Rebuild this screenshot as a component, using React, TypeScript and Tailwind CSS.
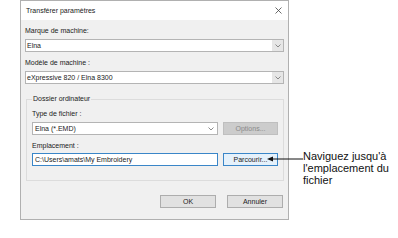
import React from 'react';

function Chevron({ className = '' }: { className?: string }) {
  return (
    <svg width="6" height="4" viewBox="0 0 6 4" className={className}>
      <path d="M0.5 0.5 L3 3 L5.5 0.5" fill="none" stroke="#707070" strokeWidth="0.8" />
    </svg>
  );
}

function DropSelect({ value }: { value: string }) {
  return (
    <div className="flex h-[13px] w-full items-stretch border border-[#b4b4b4] bg-white">
      <div className="flex-1 pl-[1px] text-[7px] leading-[11px]">{value}</div>
      <div className="flex w-[11px] items-center justify-center bg-[#e6e6e6]">
        <Chevron />
      </div>
    </div>
  );
}

function Label({ children, className = '' }: { children: React.ReactNode; className?: string }) {
  return <div className={`h-[10px] text-[7px] leading-[10px] ${className}`}>{children}</div>;
}

export default function App() {
  return (
    <div className="relative flex h-[238px] w-[398px] items-start overflow-hidden bg-white font-['Liberation_Sans',Arial,sans-serif] text-[#222]">
      {/* Dialog */}
      <div className="ml-[20px] flex h-[220px] w-[269px] flex-col border border-[#b0b0b0] bg-[#f0f0f0]">
        {/* Title bar */}
        <div className="flex h-[19px] items-center justify-between bg-white pl-[5px] pr-[6px]">
          <span className="text-[7px] leading-[10px]">Transférer paramètres</span>
          <svg width="7" height="7" viewBox="0 0 7 7">
            <path d="M0.5 0.5 L6.5 6.5 M6.5 0.5 L0.5 6.5" stroke="#444" strokeWidth="0.8" />
          </svg>
        </div>

        {/* Body */}
        <div className="flex flex-1 flex-col px-[4px] pt-[6px]">
          <Label className="mb-[3px]">Marque de machine:</Label>
          <DropSelect value="Elna" />

          <Label className="mb-[3px] mt-[6px]">Modèle de machine :</Label>
          <DropSelect value="eXpressive 820 / Elna 8300" />

          <fieldset className="ml-[1px] mr-0 mt-[10px] border border-[#dcdcdc] px-[5px] pb-[14px]">
            <legend className="px-[1px] text-[7px] leading-[10px]">Dossier ordinateur</legend>

            <Label className="mb-[3px] mt-[5px]">Type de fichier :</Label>
            <div className="flex gap-[5px]">
              <div className="flex h-[13px] w-[186px] items-center border border-[#b4b4b4] bg-white pr-[3px]">
                <div className="flex-1 pl-[2px] text-[7px] leading-[11px]">Elna (*.EMD)</div>
                <Chevron />
              </div>
              <div className="flex h-[13px] w-[55px] items-center justify-center border border-[#bfbfbf] bg-[#cccccc] text-[7px] leading-[11px] text-[#8a8a8a]">
                Options...
              </div>
            </div>

            <Label className="mb-[2px] mt-[6px]">Emplacement :</Label>
            <div className="flex gap-[5px]">
              <div className="flex h-[13px] w-[186px] items-center border border-[#3a86c8] bg-white pl-[2px] text-[7px] leading-[11px]">
                C:\Users\amats\My Embroidery
              </div>
              <div className="flex h-[13px] w-[55px] items-center justify-center border border-[#3a86c8] bg-[#e5f1fb] text-[7px] leading-[11px]">
                Parcourir...
              </div>
            </div>
          </fieldset>

          <div className="mt-[14px] flex justify-end gap-[11px] pr-[1px]">
            <div className="flex h-[13px] w-[56px] items-center justify-center border border-[#adadad] bg-[#e1e1e1] text-[7px] leading-[11px]">
              OK
            </div>
            <div className="flex h-[13px] w-[56px] items-center justify-center border border-[#adadad] bg-[#e1e1e1] text-[7px] leading-[11px]">
              Annuler
            </div>
          </div>
        </div>
      </div>

      {/* Callout text */}
      <div className="ml-[14px] mt-[150px] text-[11px] leading-[12px] text-[#111]">
        <div>Naviguez jusqu'à</div>
        <div>l'emplacement du</div>
        <div>fichier</div>
      </div>

      {/* Callout arrow */}
      <svg className="absolute left-[264px] top-[155px]" width="40" height="8" viewBox="0 0 40 8">
        <line x1="7" y1="4" x2="39" y2="4" stroke="#111" strokeWidth="1" />
        <polygon points="3,4 9,1.5 9,6.5" fill="#111" />
      </svg>
    </div>
  );
}
